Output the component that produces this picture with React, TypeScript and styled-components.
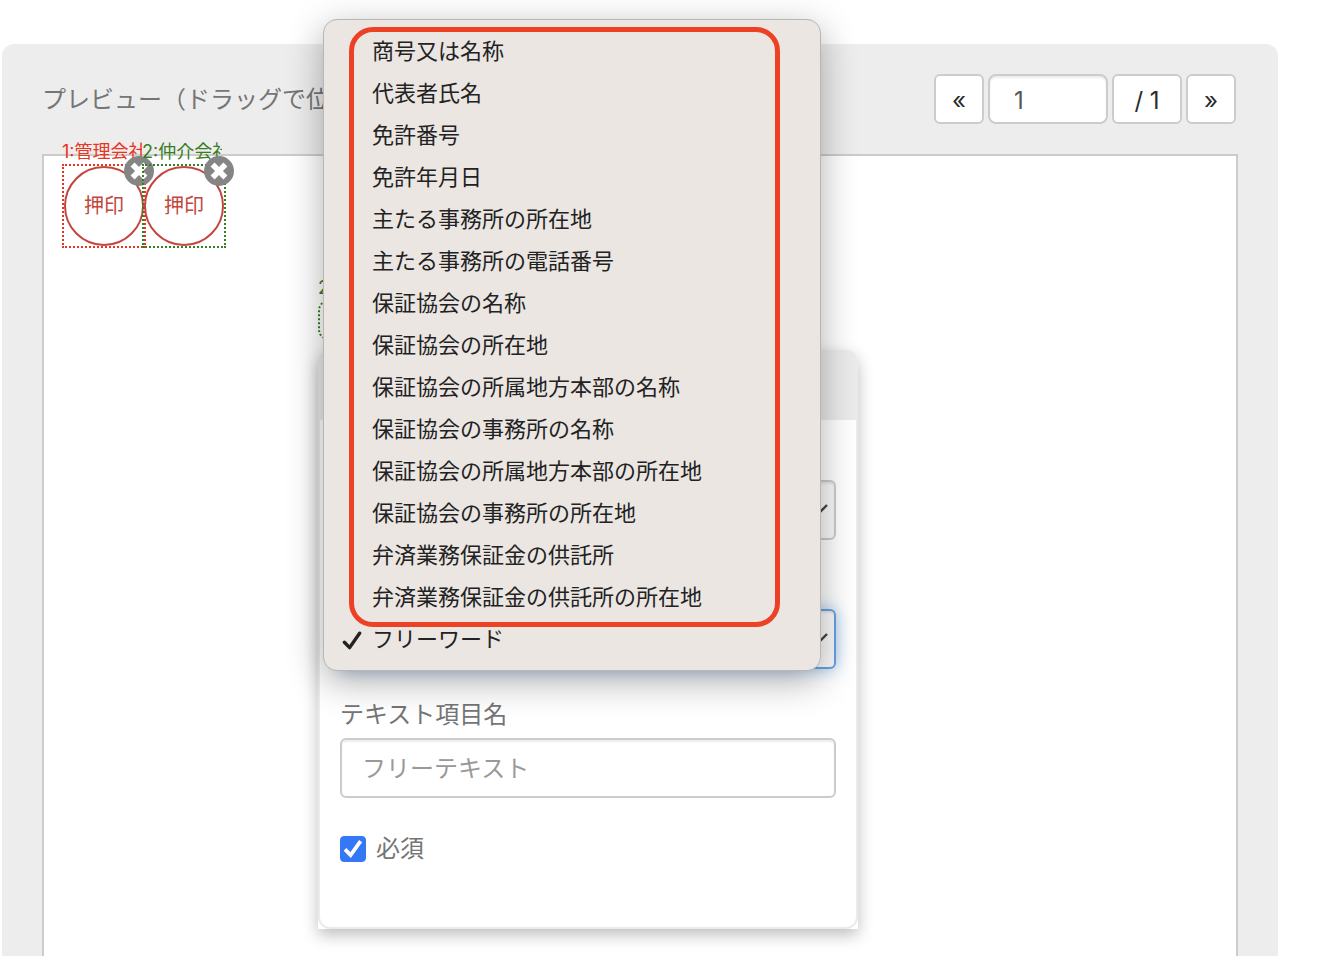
import React from "react";
import styled, { createGlobalStyle, css } from "styled-components";

const GlobalStyle = createGlobalStyle`
  *, *::before, *::after { box-sizing: border-box; }
  body {
    margin: 0;
    background: #fff;
    color: #757575;
    font-family: Inter, "Noto Sans CJK JP", sans-serif;
    font-size: 24px;
  }
  button, input, select { font: inherit; margin: 0; }
`;

const Page = styled.main`
  display: flex;
  min-height: 100vh;
  padding: 44px 42px 0 2px;
`;

const Panel = styled.section`
  flex: 1;
  display: flex;
  flex-direction: column;
  padding: 30px 40px 0;
  background: #ededed;
  border-radius: 12px 12px 0 0;
`;

const Toolbar = styled.header`
  display: flex;
  align-items: flex-start;
  justify-content: space-between;
  padding-right: 2px;
  height: 80px;
`;

const Title = styled.h1`
  margin: 0;
  font-size: 24px;
  font-weight: 400;
  line-height: 52px;
  white-space: nowrap;
`;

const Pager = styled.nav`
  display: flex;
  gap: 4px;
`;

const pagerBox = css`
  height: 50px;
  background: #fff;
  border: 2px solid #ccc;
  border-radius: 6px;
`;

const PagerButton = styled.button<{ $wide?: boolean }>`
  ${pagerBox}
  width: ${(p) => (p.$wide ? 70 : 50)}px;
  padding: 2px 0 0;
  color: #2b2b2b;
`;

const PageInput = styled.input`
  ${pagerBox}
  width: 120px;
  padding: 2px 24px 0;
  border-radius: 8px;
  color: #555;
  box-shadow: inset 0 2px 2px rgba(0, 0, 0, 0.08);
`;

const Canvas = styled.div`
  position: relative;
  flex: 1;
  background: #fff;
  border: 2px solid #ccc;
  border-bottom: 0;
`;

const Placed = styled.div<{ $x: number; $y: number; $color: string }>`
  position: absolute;
  left: ${(p) => p.$x}px;
  top: ${(p) => p.$y}px;
  color: ${(p) => p.$color};
`;

const ItemLabel = styled.div`
  width: 80px;
  height: 26px;
  overflow: hidden;
  white-space: nowrap;
  font-size: 18px;
  line-height: 28px;
`;

const SealFrame = styled.div`
  position: relative;
  width: 84px;
  border: 2px dotted currentColor;
`;

const Seal = styled.div`
  height: 80px;
  border: 2px solid #c3463c;
  border-radius: 50%;
  color: #c3463c;
  font-size: 20px;
  line-height: 77px;
  text-align: center;
`;

const RemoveButton = styled.button`
  position: absolute;
  top: -10px;
  right: -10px;
  width: 30px;
  height: 30px;
  padding: 0;
  border: 0;
  border-radius: 50%;
  background: #858585;
  svg { display: block; }
`;

const TextFrame = styled.div`
  width: 240px;
  height: 40px;
  border: 2px dotted currentColor;
  border-radius: 10px;
`;

const Dialog = styled.div`
  position: absolute;
  left: 274px;
  top: 194px;
  width: 540px;
  background: #fff;
  border-radius: 12px 12px 0 0;
  box-shadow: 0 6px 16px rgba(0, 0, 0, 0.26);
`;

const DialogFrame = styled.div`
  border: 2px solid #ebebeb;
  border-radius: 12px;
`;

const DialogHead = styled.div`
  height: 68px;
  background: #ebebeb;
  border-radius: 8px 8px 0 0;
`;

const DialogBody = styled.form`
  display: flex;
  flex-direction: column;
  gap: 27px;
  padding: 18px 20px 60px;
`;

const Field = styled.div`
  position: relative;
  display: flex;
  flex-direction: column;
  justify-content: flex-end;
  gap: 4px;
  min-height: 102px;
`;

const Label = styled.label`
  line-height: 38px;
`;

const control = css`
  width: 100%;
  height: 60px;
  padding: 0 20px;
  border: 2px solid #ccc;
  border-radius: 6px;
  color: #555;
  outline: 0;
`;

const TextInput = styled.input`
  ${control}
  background: #fff;
  box-shadow: inset 0 2px 2px rgba(0, 0, 0, 0.08);
  &::placeholder { color: #999; opacity: 1; }
`;

const SelectWrap = styled.div`
  display: grid;
  align-items: center;
  > * { grid-area: 1 / 1; }
  svg { justify-self: end; margin-right: 8px; pointer-events: none; }
`;

const Select = styled.select<{ $active?: boolean }>`
  ${control}
  appearance: none;
  background: #fbfbfb;
  box-shadow: inset 0 2px 2px rgba(0, 0, 0, 0.08);
  ${(p) =>
    p.$active &&
    css`
      border-color: #66a3e0;
      box-shadow: inset 0 2px 2px rgba(0, 0, 0, 0.08), 0 0 16px rgba(90, 155, 225, 0.6);
    `}
`;

const Menu = styled.div`
  position: absolute;
  z-index: 10;
  left: -17px;
  right: 15px;
  bottom: -2px;
  padding: 10px 0;
  background: #ebe6e2;
  border: 1px solid #b9b6b4;
  border-radius: 14px;
  box-shadow: 0 10px 36px rgba(0, 0, 0, 0.32);
`;

const MarkedGroup = styled.div`
  position: relative;
  &::after {
    content: "";
    position: absolute;
    inset: -3px 40px -9px 25px;
    border: 5px solid #ed4126;
    border-radius: 24px;
    pointer-events: none;
  }
`;

const Option = styled.button`
  display: grid;
  grid-template-columns: 20px 1fr;
  column-gap: 10px;
  align-items: center;
  width: 100%;
  height: 42px;
  padding: 0 18px;
  border: 0;
  background: transparent;
  color: #222;
  font-size: 22px;
  line-height: 42px;
  text-align: left;
  white-space: nowrap;
  span { grid-column: 2; }
`;

const CheckLabel = styled.label`
  display: flex;
  align-items: center;
  gap: 10px;
  margin-top: 6px;
  line-height: 36px;
`;

const CheckWrap = styled.span`
  display: grid;
  > * { grid-area: 1 / 1; }
  svg { pointer-events: none; }
`;

const Checkbox = styled.input`
  appearance: none;
  width: 26px;
  height: 26px;
  border: 1px solid #bbb;
  border-radius: 4px;
  background: #fff;
  &:checked { border-color: #3478f6; background: #3478f6; }
`;

const Chevron = () => (
  <svg width="22" height="14" viewBox="0 0 22 14" fill="none" stroke="#444" strokeWidth="2.4" aria-hidden="true">
    <path d="M1 2l10 10L21 2" />
  </svg>
);

const options = [
  "商号又は名称",
  "代表者氏名",
  "免許番号",
  "免許年月日",
  "主たる事務所の所在地",
  "主たる事務所の電話番号",
  "保証協会の名称",
  "保証協会の所在地",
  "保証協会の所属地方本部の名称",
  "保証協会の事務所の名称",
  "保証協会の所属地方本部の所在地",
  "保証協会の事務所の所在地",
  "弁済業務保証金の供託所",
  "弁済業務保証金の供託所の所在地",
];

const seals = [
  { label: "1:管理会社", x: 18, color: "#e93323" },
  { label: "2:仲介会社", x: 98, color: "#377d22" },
];

export default function App() {
  return (
    <>
      <GlobalStyle />
      <Page>
        <Panel>
          <Toolbar>
            <Title>プレビュー（ドラッグで位</Title>
            <Pager>
              <PagerButton type="button">«</PagerButton>
              <PageInput aria-label="ページ" defaultValue="1" />
              <PagerButton type="button" $wide>/ 1</PagerButton>
              <PagerButton type="button">»</PagerButton>
            </Pager>
          </Toolbar>
          <Canvas>
            {seals.map((s) => (
              <Placed key={s.label} $x={s.x} $y={-18} $color={s.color}>
                <ItemLabel>{s.label}</ItemLabel>
                <SealFrame>
                  <Seal>押印</Seal>
                  <RemoveButton type="button" aria-label="削除">
                    <svg width="30" height="30" viewBox="0 0 30 30" stroke="#fff" strokeWidth="5.6" aria-hidden="true">
                      <path d="M8.6 8.6l12.8 12.8M21.4 8.6L8.6 21.4" />
                    </svg>
                  </RemoveButton>
                </SealFrame>
              </Placed>
            ))}
            <Placed $x={274} $y={118} $color="#377d22">
              <ItemLabel>2</ItemLabel>
              <TextFrame />
            </Placed>
            <Dialog>
              <DialogFrame>
                <DialogHead />
                <DialogBody>
                  <Field>
                    <SelectWrap>
                      <Select aria-label="種類" />
                      <Chevron />
                    </SelectWrap>
                  </Field>
                  <Field>
                    <SelectWrap>
                      <Select aria-label="項目" $active />
                      <Chevron />
                    </SelectWrap>
                    <Menu role="listbox" aria-label="項目">
                      <MarkedGroup role="group">
                        {options.map((o) => (
                          <Option key={o} type="button" role="option" aria-selected={false}>
                            <span>{o}</span>
                          </Option>
                        ))}
                      </MarkedGroup>
                      <Option type="button" role="option" aria-selected>
                        <svg width="20" height="22" viewBox="0 0 20 22" fill="none" stroke="#222" strokeWidth="3.4" strokeLinecap="round" strokeLinejoin="round" aria-hidden="true">
                          <path d="M2.4 14.2l5.2 5.4L17.6 5.2" />
                        </svg>
                        <span>フリーワード</span>
                      </Option>
                    </Menu>
                  </Field>
                  <Field>
                    <Label htmlFor="item-name">テキスト項目名</Label>
                    <TextInput id="item-name" placeholder="フリーテキスト" />
                  </Field>
                  <CheckLabel>
                    <CheckWrap>
                      <Checkbox type="checkbox" defaultChecked />
                      <svg width="26" height="26" viewBox="0 0 26 26" fill="none" stroke="#fff" strokeWidth="3.8" aria-hidden="true">
                        <path d="M5 13.4l5.6 5.6L20.6 5.2" />
                      </svg>
                    </CheckWrap>
                    必須
                  </CheckLabel>
                </DialogBody>
              </DialogFrame>
            </Dialog>
          </Canvas>
        </Panel>
      </Page>
    </>
  );
}
